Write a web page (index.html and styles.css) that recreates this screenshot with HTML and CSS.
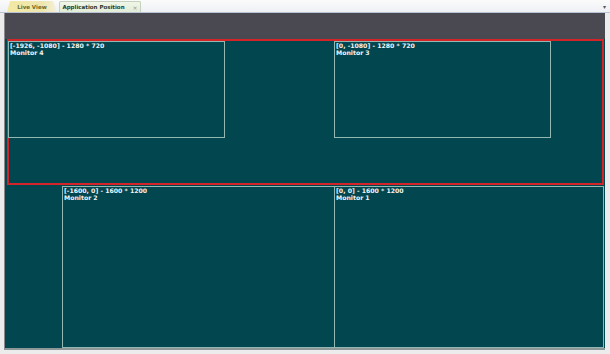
FILE: index.html
```html
<!DOCTYPE html>
<html>
<head>
<meta charset="utf-8">
<link rel="stylesheet" href="styles.css">
</head>
<body>
<div class="window">
  <div class="tabstrip">
    <div class="tab tab-live">Live View</div>
    <div class="tab tab-app">Application Position <span class="close">×</span></div>
    <div class="spacer"></div>
    <div class="dropdown">▾</div>
  </div>
  <div class="panel">
    <div class="toolbar"></div>
    <div class="canvas">
      <div class="selection"></div>
      <div class="monitor m4"><div class="label">[-1926, -1080] - 1280 * 720</div><div class="label">Monitor 4</div></div>
      <div class="monitor m3"><div class="label">[0, -1080] - 1280 * 720</div><div class="label">Monitor 3</div></div>
      <div class="monitor m2"><div class="label">[-1600, 0] - 1600 * 1200</div><div class="label">Monitor 2</div></div>
      <div class="monitor m1"><div class="label">[0, 0] - 1600 * 1200</div><div class="label">Monitor 1</div></div>
    </div>
  </div>
</div>
</body>
</html>
```
FILE: styles.css
```css
html, body {
  margin: 0;
  padding: 0;
}
body {
  width: 610px;
  height: 354px;
  background: #ececec;
  font-family: "DejaVu Sans", Verdana, sans-serif;
  overflow: hidden;
}
.window {
  display: flex;
  flex-direction: column;
  height: 354px;
}
.tabstrip {
  height: 12px;
  display: flex;
  align-items: flex-end;
  background: linear-gradient(#fbfbfb, #eef0f4);
  border-bottom: 1px solid #b9c3d6;
  padding-left: 7px;
  padding-right: 4px;
}
.tab {
  height: 11px;
  font-size: 5.5px;
  font-weight: bold;
  display: flex;
  align-items: center;
  justify-content: center;
  box-sizing: border-box;
  border-radius: 2px 2px 0 0;
}
.tab-live {
  width: 50px;
  color: #6a6a2a;
  background: linear-gradient(90deg, #f3e9a2, #eee6b0 70%, #f4f0d8);
  clip-path: polygon(6% 0, 92% 0, 100% 100%, 0 100%);
}
.tab-app {
  width: 82px;
  margin-left: 2px;
  color: #2a3a2a;
  background: linear-gradient(#f0f6e8, #e2ecd6);
  border: 1px solid #c5d0bd;
  border-bottom: none;
  gap: 8px;
}
.close {
  font-size: 6px;
  color: #a09090;
  font-weight: normal;
}
.spacer {
  flex: 1;
}
.dropdown {
  font-size: 6px;
  color: #555;
  align-self: center;
}
.panel {
  margin-left: 4px;
  width: 600px;
  height: 335px;
  display: flex;
  flex-direction: column;
  border-left: 1px solid #8a8a8a;
  border-bottom: 2px solid #8f9898;
}
.toolbar {
  height: 26px;
  background: #4a4851;
}
.canvas {
  position: relative;
  flex: 1;
  background: #024650;
}
.selection {
  position: absolute;
  left: 2px;
  top: 0;
  width: 597px;
  height: 146px;
  box-sizing: border-box;
  border: 2px solid #d42428;
}
.monitor {
  position: absolute;
  box-sizing: border-box;
  border: 1px solid #93b8b2;
  color: #f2f4f4;
  font-size: 6.2px;
  font-weight: bold;
  line-height: 7px;
  padding: 0 1px;
}
.m4 {
  left: 3px;
  top: 2px;
  width: 217px;
  height: 97px;
}
.m3 {
  left: 329px;
  top: 2px;
  width: 217px;
  height: 97px;
}
.m2 {
  left: 57px;
  top: 147px;
  width: 273px;
  height: 162px;
}
.m1 {
  left: 329px;
  top: 147px;
  width: 270px;
  height: 162px;
}
```
